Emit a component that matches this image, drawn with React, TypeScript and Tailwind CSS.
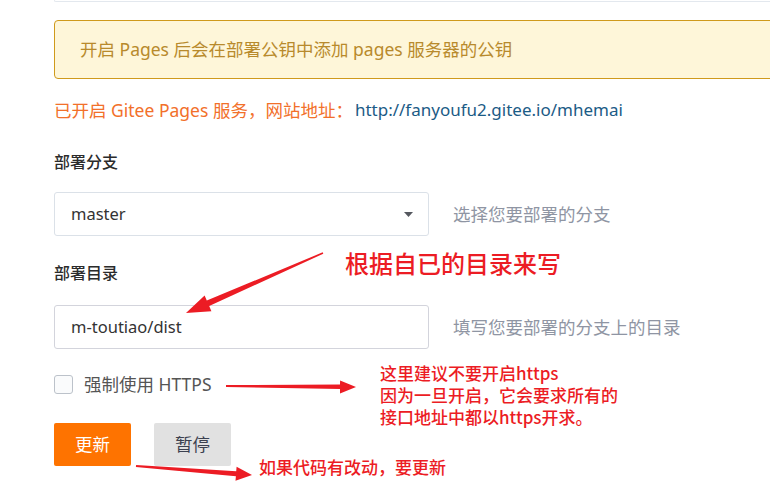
import React from 'react';

type Pt = [number, number];

// tapered arrow: thin at the tail, widening shaft, triangular head
function arrowPoints(tail: Pt, tip: Pt, tailW: number, shaftW: number, headLen: number, headW: number) {
  const dx = tip[0] - tail[0];
  const dy = tip[1] - tail[1];
  const len = Math.hypot(dx, dy);
  const ux = dx / len;
  const uy = dy / len;
  const nx = -uy;
  const ny = ux;
  const base: Pt = [tip[0] - ux * headLen, tip[1] - uy * headLen];
  const p = (o: Pt, w: number): string => `${(o[0] + nx * w).toFixed(1)},${(o[1] + ny * w).toFixed(1)}`;
  return [
    p(tail, tailW / 2),
    p(base, shaftW / 2),
    p(base, headW / 2),
    `${tip[0]},${tip[1]}`,
    p(base, -headW / 2),
    p(base, -shaftW / 2),
    p(tail, -tailW / 2),
  ].join(' ');
}

const arrows = [
  { tail: [323, 253] as Pt, tip: [186, 313] as Pt, tailW: 1.5, shaftW: 6, headLen: 24, headW: 17 },
  { tail: [226, 386] as Pt, tip: [356, 387] as Pt, tailW: 2, shaftW: 4.5, headLen: 16, headW: 13 },
  { tail: [136, 466] as Pt, tip: [252, 475] as Pt, tailW: 2, shaftW: 5, headLen: 16, headW: 14 },
];

export default function App() {
  return (
    <div className="relative w-[770px] h-[504px] overflow-hidden bg-white pl-[54px] font-['Noto_Sans','Noto_Sans_CJK_SC',sans-serif]">
      <div className="h-[2px] w-[760px] border-b border-l border-[#e3e8ee] rounded-bl-[3px]" />

      <div className="mt-[18px] h-[59px] w-[760px] rounded-[4px] border border-[#cf9a1c] bg-[#fef6d9] flex items-center pl-[25px] text-[17.5px] text-[#b88a2c]">
        开启 Pages 后会在部署公钥中添加 pages 服务器的公钥
      </div>

      <div className="mt-[19px] h-[24px] flex items-center text-[17.5px] leading-[24px]">
        <span className="text-[#f2702a]">已开启 Gitee Pages 服务，网站地址：</span>
        <span className="ml-[2px] text-[17px] text-[#1b5b86]">http://fanyoufu2.gitee.io/mhemai</span>
      </div>

      <div className="mt-[28px] h-[24px] leading-[24px] text-[16px] font-medium text-[#2b2b2b]">部署分支</div>

      <div className="mt-[18px] flex items-center">
        <div className="h-[44px] w-[375px] rounded-[3px] border border-[#dbe1e8] flex items-center justify-between pl-[16px] pr-[15px] text-[16.5px] text-[#333]">
          <span>master</span>
          <svg width="9" height="5" viewBox="0 0 9 5">
            <path d="M0 0 L9 0 L4.5 5 Z" fill="#55585f" />
          </svg>
        </div>
        <span className="ml-[24px] text-[17.5px] text-[#8f95a3]">选择您要部署的分支</span>
      </div>

      <div className="mt-[25px] h-[24px] leading-[24px] text-[16px] font-medium text-[#2b2b2b]">部署目录</div>

      <div className="mt-[20px] flex items-center">
        <div className="h-[44px] w-[375px] rounded-[3px] border border-[#d3d4dc] flex items-center pl-[16px] text-[16.5px] text-[#333]">
          m-toutiao/dist
        </div>
        <span className="ml-[24px] text-[17.5px] text-[#8f95a3]">填写您要部署的分支上的目录</span>
      </div>

      <div className="mt-[23px] h-[24px] flex items-center">
        <div className="h-[19px] w-[19px] rounded-[3px] border border-[#bcc2ca] bg-[#fafbfc]" />
        <span className="ml-[11px] text-[17.5px] text-[#555]">强制使用 HTTPS</span>
      </div>

      <div className="mt-[27px] flex gap-[23px]">
        <button className="h-[43px] w-[77px] rounded-[2px] bg-[#fe7300] text-white text-[17.5px]">更新</button>
        <button className="h-[43px] w-[77px] rounded-[2px] bg-[#e1e1e1] text-[#3c4150] text-[17.5px]">暂停</button>
      </div>

      <svg className="absolute left-0 top-0 pointer-events-none" width="770" height="504">
        {arrows.map((a, i) => (
          <polygon key={i} points={arrowPoints(a.tail, a.tip, a.tailW, a.shaftW, a.headLen, a.headW)} fill="#ec1c24" />
        ))}
      </svg>

      <div className="absolute left-[345px] top-[249px] text-[24px] leading-[28px] font-medium text-[#ec1c24] font-['Noto_Sans_CJK_SC',sans-serif]">
        根据自已的目录来写
      </div>
      <div className="absolute left-[380px] top-[362px] text-[17px] leading-[22px] font-medium text-[#ec1c24] font-['Noto_Sans_CJK_SC',sans-serif]">
        <div>这里建议不要开启https</div>
        <div>因为一旦开启，它会要求所有的</div>
        <div>接口地址中都以https开求。</div>
      </div>
      <div className="absolute left-[259px] top-[456px] text-[17px] leading-[22px] font-medium text-[#ec1c24] font-['Noto_Sans_CJK_SC',sans-serif]">
        如果代码有改动，要更新
      </div>
    </div>
  );
}
